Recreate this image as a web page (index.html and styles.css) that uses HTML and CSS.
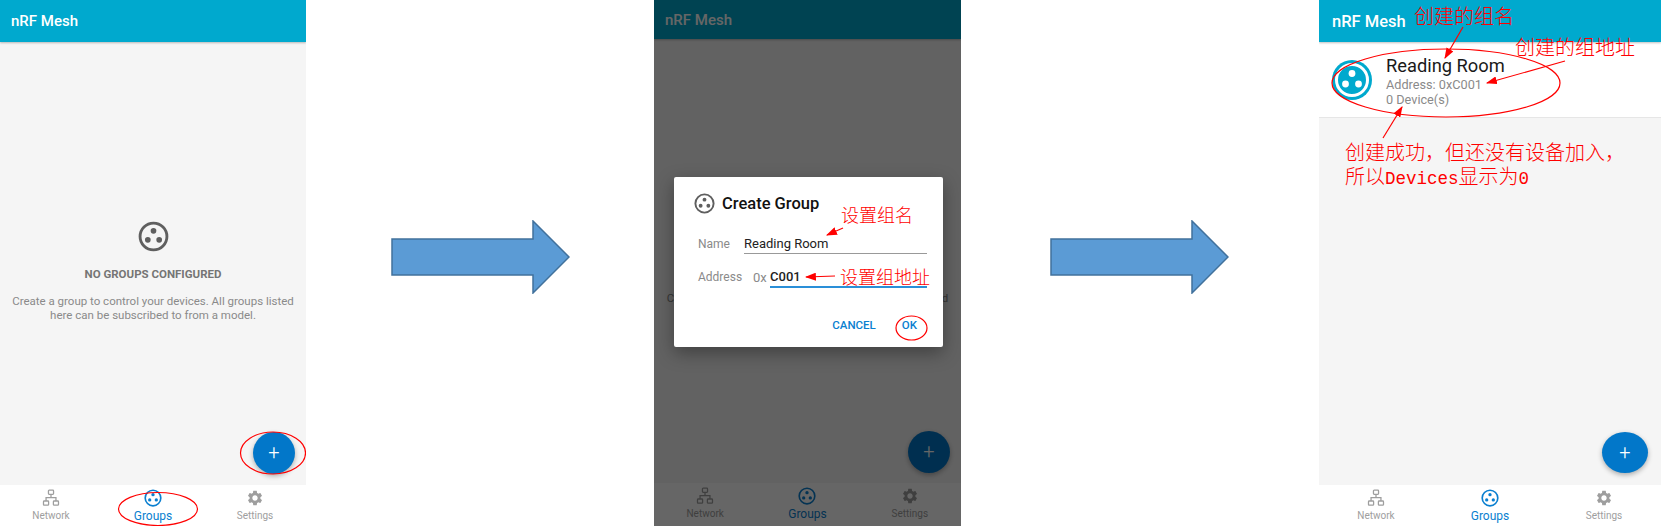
FILE: index.html
```html
<!DOCTYPE html>
<html>
  <head>
    <meta charset="UTF-8" />
    <meta name="viewport" content="width=device-width, initial-scale=1.0" />
    <title>nRF Mesh Create Group</title>
    <link rel="stylesheet" href="styles.css">
  </head>
  <body>
    <svg class="defs" width="0" height="0">
      <defs>
        <symbol id="icon-group" viewBox="0 0 24 24">
          <circle cx="12" cy="12" r="10.4" fill="none" stroke="currentColor" stroke-width="2.2" />
          <circle cx="12" cy="7.6" r="2.2" fill="currentColor" />
          <circle cx="7.6" cy="14.6" r="2.2" fill="currentColor" />
          <circle cx="16.4" cy="14.6" r="2.2" fill="currentColor" />
        </symbol>
        <symbol id="icon-network" viewBox="0 0 24 24">
          <g fill="none" stroke="currentColor" stroke-width="1.7">
            <rect x="8.6" y="1.5" width="6.8" height="5.6" rx="1" />
            <rect x="2" y="16" width="6.8" height="5.6" rx="1" />
            <rect x="15.2" y="16" width="6.8" height="5.6" rx="1" />
            <path d="M12 7.1V11.5M5.4 16V11.5H18.6V16" />
          </g>
        </symbol>
        <symbol id="icon-gear" viewBox="0 0 24 24">
          <path fill="currentColor" d="M19.14 12.94c.04-.3.06-.61.06-.94 0-.32-.02-.64-.07-.94l2.03-1.58c.18-.14.23-.41.12-.61l-1.92-3.32c-.12-.22-.37-.29-.59-.22l-2.39.96c-.5-.38-1.03-.7-1.62-.94l-.36-2.54c-.04-.24-.24-.41-.48-.41h-3.84c-.24 0-.43.17-.47.41l-.36 2.54c-.59.24-1.13.57-1.62.94l-2.39-.96c-.22-.08-.47 0-.59.22L2.74 8.87c-.12.21-.08.47.12.61l2.03 1.58c-.05.3-.09.63-.09.94s.02.64.07.94l-2.03 1.58c-.18.14-.23.41-.12.61l1.92 3.32c.12.22.37.29.59.22l2.39-.96c.5.38 1.03.7 1.62.94l.36 2.54c.05.24.24.41.48.41h3.84c.24 0 .44-.17.47-.41l.36-2.54c.59-.24 1.13-.56 1.62-.94l2.39.96c.22.08.47 0 .59-.22l1.92-3.32c.12-.22.07-.47-.12-.61l-2.01-1.58zM12 15.6c-1.98 0-3.6-1.62-3.6-3.6s1.62-3.6 3.6-3.6 3.6 1.62 3.6 3.6-1.62 3.6-3.6 3.6z" />
        </symbol>
        <marker id="arrow-head" viewBox="0 0 10 10" refX="9" refY="5" markerWidth="11" markerHeight="8" markerUnits="userSpaceOnUse" orient="auto" preserveAspectRatio="none">
          <path d="M0 0L10 5L0 10z" fill="#f00" />
        </marker>
      </defs>
    </svg>

    <div class="page">
      <!-- Step 1: empty list -->
      <section class="phone phone-one">
        <header class="app-bar">nRF Mesh</header>
        <main class="content">
          <div class="empty">
            <svg class="empty-icon"><use href="#icon-group" /></svg>
            <h2>NO GROUPS CONFIGURED</h2>
            <p>Create a group to control your devices. All groups listed here can be subscribed to from a model.</p>
          </div>
        </main>
        <nav class="tabs">
          <div class="tab"><svg><use href="#icon-network" /></svg>Network</div>
          <div class="tab active"><svg><use href="#icon-group" /></svg>Groups</div>
          <div class="tab"><svg><use href="#icon-gear" /></svg>Settings</div>
        </nav>
        <button class="fab">+</button>
        <svg class="marks" viewBox="0 0 306 526">
          <ellipse cx="273" cy="453" rx="32.5" ry="21" />
          <ellipse cx="158" cy="509" rx="39.5" ry="16.5" />
        </svg>
      </section>

      <div class="step-arrow step-first">
        <svg width="179" height="74" viewBox="0 0 179 74">
          <path d="M1 19H142V1L178 37L142 73V55H1z" />
        </svg>
      </div>

      <!-- Step 2: dialog -->
      <section class="phone phone-two">
        <header class="app-bar">nRF Mesh</header>
        <main class="content">
          <div class="empty">
            <svg class="empty-icon"><use href="#icon-group" /></svg>
            <h2>NO GROUPS CONFIGURED</h2>
            <p>Create a group to control your devices. All groups listed here can be subscribed to from a model.</p>
          </div>
        </main>
        <nav class="tabs">
          <div class="tab"><svg><use href="#icon-network" /></svg>Network</div>
          <div class="tab active"><svg><use href="#icon-group" /></svg>Groups</div>
          <div class="tab"><svg><use href="#icon-gear" /></svg>Settings</div>
        </nav>
        <button class="fab">+</button>
        <div class="scrim"></div>
        <div class="dialog">
          <div class="dialog-title">
            <svg><use href="#icon-group" /></svg>
            <span>Create Group</span>
          </div>
          <div class="fields">
            <div class="field">
              <label>Name</label>
              <div class="value">Reading Room</div>
            </div>
            <div class="field">
              <label class="label-wide">Address</label>
              <span class="prefix">0x</span>
              <div class="value focused">C001</div>
            </div>
          </div>
          <div class="dialog-actions">
            <span>CANCEL</span>
            <span>OK</span>
          </div>
        </div>
        <svg class="marks" viewBox="0 0 307 526">
          <ellipse cx="257.5" cy="328" rx="15.5" ry="12" />
          <line x1="189" y1="228" x2="173" y2="235" marker-end="url(#arrow-head)" />
          <line x1="181" y1="276" x2="152" y2="277" marker-end="url(#arrow-head)" />
        </svg>
        <span class="note note-small note-name">设置组名</span>
        <span class="note note-small note-addr">设置组地址</span>
      </section>

      <div class="step-arrow step-second">
        <svg width="179" height="74" viewBox="0 0 179 74">
          <path d="M1 19H142V1L178 37L142 73V55H1z" />
        </svg>
      </div>

      <!-- Step 3: group created -->
      <section class="phone phone-three">
        <header class="app-bar">nRF Mesh</header>
        <main class="content">
          <div class="group-row">
            <svg class="group-badge" viewBox="0 0 40 40">
              <circle cx="20" cy="20" r="20" fill="#00a9ce" />
              <circle cx="20" cy="20" r="15.5" fill="#00a9ce" stroke="#fff" stroke-width="3" />
              <circle cx="20" cy="13.5" r="3.4" fill="#fff" />
              <circle cx="13.5" cy="24" r="3.4" fill="#fff" />
              <circle cx="26.5" cy="24" r="3.4" fill="#fff" />
            </svg>
            <div class="group-text">
              <div class="group-name">Reading Room</div>
              <div class="group-meta">Address: 0xC001</div>
              <div class="group-meta">0 Device(s)</div>
            </div>
          </div>
        </main>
        <nav class="tabs">
          <div class="tab"><svg><use href="#icon-network" /></svg>Network</div>
          <div class="tab active"><svg><use href="#icon-group" /></svg>Groups</div>
          <div class="tab"><svg><use href="#icon-gear" /></svg>Settings</div>
        </nav>
        <button class="fab">+</button>
        <svg class="marks" viewBox="0 0 342 526">
          <ellipse cx="127" cy="83" rx="114" ry="34" />
          <line x1="144" y1="27" x2="126" y2="58" marker-end="url(#arrow-head)" />
          <line x1="246" y1="61" x2="168" y2="83" marker-end="url(#arrow-head)" />
          <line x1="64" y1="138" x2="83" y2="107" marker-end="url(#arrow-head)" />
        </svg>
        <span class="note note-title">创建的组名</span>
        <span class="note note-address">创建的组地址</span>
        <div class="note note-result">
          创建成功，但还没有设备加入，<br />所以<span class="latin">Devices</span>显示为<span class="latin">0</span>
        </div>
      </section>
    </div>
  </body>
</html>
```

FILE: styles.css
```css
* {
  box-sizing: border-box;
}

html,
body {
  margin: 0;
  height: 526px;
  overflow: hidden;
  background-color: white;
  font-family: Roboto, "Liberation Sans", sans-serif;
}

.defs {
  position: absolute;
}

.page {
  display: flex;
  width: 1661px;
  height: 526px;
}

.phone {
  position: relative;
  display: flex;
  flex-direction: column;
  flex: none;
  height: 526px;
  overflow: hidden;
  background-color: #f5f5f5;
}

.phone-one {
  width: 306px;
}

.phone-two {
  width: 307px;
  --bar-height: 39px;
  --tabs-height: 43px;
  --fab-bottom: 53px;
}

/* the title sits behind the dialog here */
.phone-two .empty h2 {
  visibility: hidden;
}

.phone-three {
  width: 342px;
  --bar-left: 13px;
  --bar-size: 16.5px;
  --fab-right: 13px;
  --fab-width: 46px;
  --fab-height: 41px;
  --fab-bottom: 53px;
}

.step-arrow {
  flex: none;
  padding-top: 220px;
}

.step-first {
  width: 348px;
  padding-left: 85px;
}

.step-second {
  width: 358px;
  padding-left: 89px;
}

.step-arrow svg {
  display: block;
}

.step-arrow path {
  fill: #5b9bd5;
  stroke: #41719c;
  stroke-width: 1.5;
}

.app-bar {
  flex: none;
  display: flex;
  align-items: center;
  height: var(--bar-height, 42px);
  padding-left: var(--bar-left, 11px);
  background-color: #00a9ce;
  box-shadow: 0 1px 2px rgba(0, 0, 0, 0.25);
  color: white;
  font-size: var(--bar-size, 15px);
  font-weight: 500;
  position: relative;
}

.content {
  flex: 1;
  min-height: 0;
}

.empty {
  display: flex;
  flex-direction: column;
  align-items: center;
  padding: 179px 12px 0;
  text-align: center;
  color: #757575;
}

.empty-icon {
  width: 31px;
  height: 31px;
  color: #5f5f5f;
}

.empty h2 {
  margin: 15px 0 0;
  font-size: 11.5px;
  line-height: 14px;
  font-weight: 700;
}

.empty p {
  margin: 13px 0 0;
  font-size: 11.5px;
  line-height: 14px;
  color: #8a8a8a;
}

.tabs {
  flex: none;
  display: grid;
  grid-template-columns: repeat(3, 1fr);
  height: var(--tabs-height, 41px);
  padding-top: 4px;
  background-color: white;
}

.tab {
  display: flex;
  flex-direction: column;
  align-items: center;
  gap: 2px;
  font-size: 10px;
  line-height: 14px;
  color: #9e9e9e;
}

.tab svg {
  width: 18px;
  height: 18px;
}

.tab.active {
  color: #0a7fd0;
  font-size: 12px;
}

.fab {
  position: absolute;
  right: var(--fab-right, 11px);
  bottom: var(--fab-bottom, 52px);
  width: var(--fab-width, 42px);
  height: var(--fab-height, 42px);
  padding: 0 0 2px;
  border: 0;
  border-radius: 50%;
  background-color: #0277c9;
  box-shadow: 0 2px 5px rgba(0, 0, 0, 0.3);
  color: white;
  font-family: Roboto, sans-serif;
  font-size: 20px;
  font-weight: 300;
}

.scrim {
  position: absolute;
  inset: 0;
  background-color: rgba(0, 0, 0, 0.6);
}

.dialog {
  position: absolute;
  left: 20px;
  top: 177px;
  width: 269px;
  height: 170px;
  padding: 16px 16px 0 24px;
  border-radius: 2px;
  background-color: white;
  box-shadow: 0 6px 18px rgba(0, 0, 0, 0.35);
}

.dialog-title {
  display: flex;
  align-items: center;
  gap: 7px;
  height: 21px;
  margin-left: -4px;
  font-size: 16.5px;
  font-weight: 500;
  color: #111;
}

.dialog-title svg {
  width: 21px;
  height: 21px;
  color: #5f5f5f;
}

.fields {
  padding-top: 7px;
}

.field {
  display: flex;
  align-items: flex-end;
  height: 33px;
  font-size: 12px;
  color: #8a8a8a;
}

.field label {
  width: 46px;
  padding-bottom: 3px;
}

.field .label-wide {
  width: 55px;
}

.prefix {
  width: 17px;
  padding-bottom: 2px;
  font-size: 13px;
}

.value {
  flex: 1;
  padding-bottom: 1px;
  border-bottom: 1px solid #999;
  font-size: 13px;
  line-height: 16px;
  color: #222;
}

.value.focused {
  margin-bottom: -1px;
  border-bottom: 2px solid #2a8fd8;
  font-weight: 500;
}

.dialog-actions {
  display: flex;
  justify-content: flex-end;
  gap: 26px;
  margin-top: 31px;
  padding-right: 10px;
  font-size: 11.5px;
  font-weight: 500;
  color: #0a7fd0;
}

.group-row {
  display: flex;
  align-items: center;
  gap: 14px;
  height: 76px;
  padding-left: 13px;
  background-color: white;
  border-bottom: 1px solid #e6e6e6;
}

.group-badge {
  flex: none;
  width: 40px;
  height: 40px;
}

.group-text {
  padding-top: 2px;
}

.group-name {
  font-size: 18.3px;
  line-height: 22px;
  color: #1a1a1a;
}

.group-meta {
  font-size: 12.7px;
  line-height: 15px;
  color: #8a8a8a;
}

.marks {
  position: absolute;
  left: 0;
  top: 0;
  width: 100%;
  height: 100%;
  pointer-events: none;
}

.marks ellipse,
.marks line {
  fill: none;
  stroke: #f00;
  stroke-width: 1.2;
}

.note {
  position: absolute;
  color: #f00;
  font-family: "Noto Sans CJK SC", sans-serif;
  font-size: 20px;
  font-weight: 300;
  line-height: 24px;
  white-space: nowrap;
}

.note-small {
  font-size: 18px;
}

.note-name {
  left: 187px;
  top: 202px;
}

.note-addr {
  left: 186px;
  top: 264px;
}

.note-title {
  left: 95px;
  top: 4px;
}

.note-address {
  left: 196px;
  top: 35px;
}

.note-result {
  left: 26px;
  top: 140px;
}

.latin {
  font-family: "Liberation Mono", monospace;
  font-size: 17.5px;
}
```
